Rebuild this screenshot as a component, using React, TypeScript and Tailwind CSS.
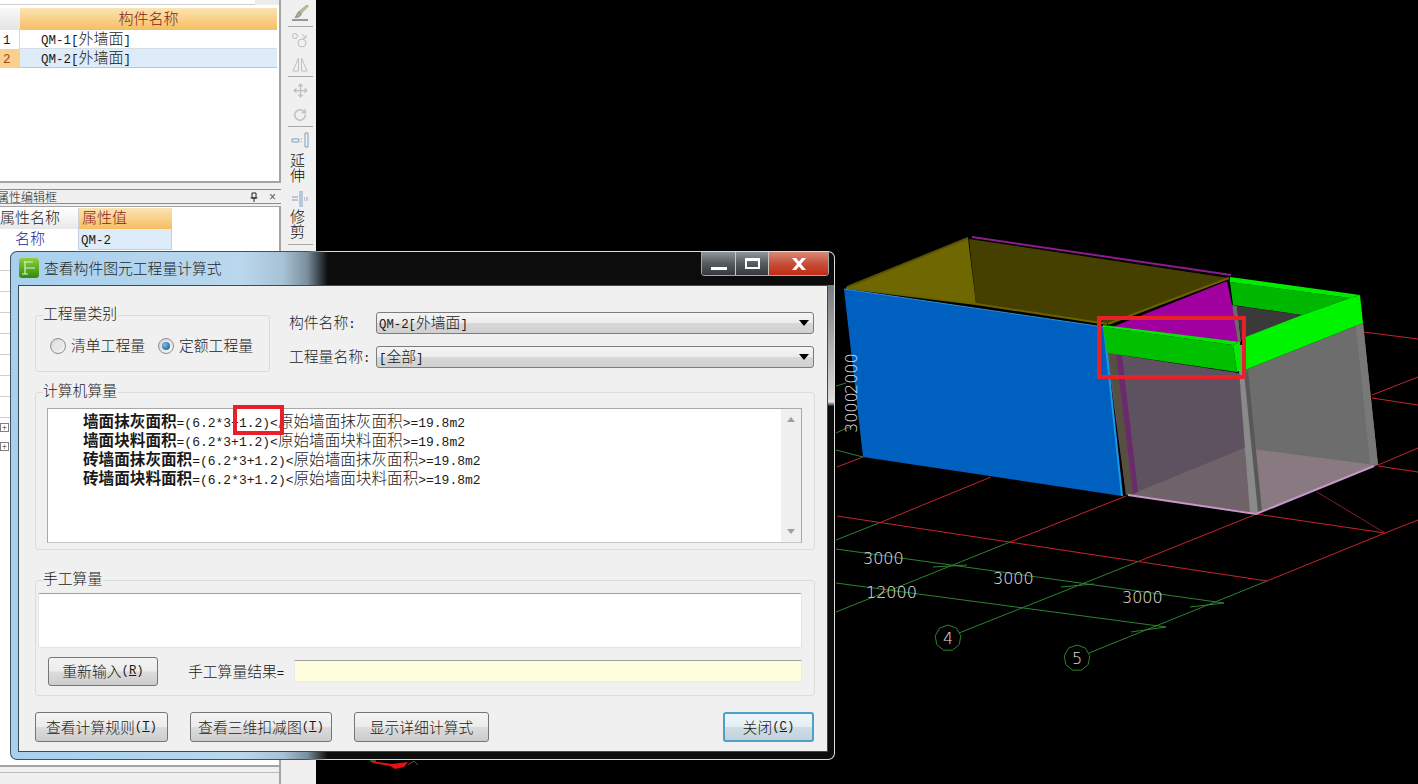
import React from "react";
import { Move, RotateCw } from "lucide-react";

function Txt({ children }: { children: string }) {
  const parts = children.split(/([\x00-\x7f]+)/);
  return (
    <>
      {parts.map((p, i) =>
        /^[\x00-\x7f]+$/.test(p) ? (
          <span key={i} className="font-['Liberation_Mono',monospace] text-[0.8333em]">
            {p}
          </span>
        ) : (
          p
        )
      )}
    </>
  );
}

function Sep() {
  return <div className="h-px w-[25px] shrink-0 bg-[#a8a8a8]" />;
}

function Toolbar() {
  return (
    <div className="flex h-full w-[35px] shrink-0 flex-col items-center bg-[#f0f0f0] pl-[3px] text-[15px] leading-[15px] text-[#111]">
      <div className="flex h-[26px] items-center">
        <svg width="20" height="20" viewBox="0 0 20 20" fill="none">
          <path d="M17 2l1 1.5-7 7-2-2z" fill="#c8c090" stroke="#8c8c70" strokeWidth="0.7" />
          <path d="M9 8.5l2.5 2.5c-1 2.5-3 3.5-6.5 3.5 1.5-1.500 1.500-4 4-6z" fill="#b0a890" stroke="#7a7a70" strokeWidth="0.7" />
          <path d="M2 17h16" stroke="#55606a" strokeWidth="1.2" />
        </svg>
      </div>
      <Sep />
      <div className="flex h-[25px] items-center">
        <svg width="18" height="18" viewBox="0 0 18 18" fill="none" stroke="#bdbdbd">
          <circle cx="4" cy="5" r="2.5" />
          <circle cx="11" cy="12" r="4" />
          <path d="M11 3l4 4M15 4v3h-3" />
        </svg>
      </div>
      <div className="flex h-[24px] items-center">
        <svg width="18" height="18" viewBox="0 0 18 18" fill="none" stroke="#c0c0c0">
          <path d="M7.500 3L2 16h5.500zM10.500 3L16 16h-5.500z" />
        </svg>
      </div>
      <Sep />
      <div className="flex h-[26px] items-center">
        <Move size={15} className="text-[#bdbdbd]" />
      </div>
      <div className="flex h-[23px] items-center">
        <RotateCw size={14} strokeWidth={3} className="text-[#c4c4c4]" />
      </div>
      <Sep />
      <div className="flex h-[25px] shrink-0 items-center pt-px">
        <svg width="18" height="16" viewBox="0 0 18 16" fill="none" stroke="#7f9fc0">
          <path d="M1 7h7v3H1zM10 7h1M10 10h1M14 1h3v14h-3z" />
        </svg>
      </div>
      <div className="-ml-[5px] text-center">延<br />伸</div>
      <div className="flex h-[26px] shrink-0 items-end">
        <svg width="18" height="18" viewBox="0 0 18 18" fill="none" stroke="#7f9fc0">
          <path d="M1 7h6M1 10h6M9 1v16M11 1v16M13 8h1M13 10h1M15 8h2M15 10h2" />
        </svg>
      </div>
      <div className="-ml-[5px] text-center">修<br />剪</div>
      <div className="mt-[6px]">
        <Sep />
      </div>
    </div>
  );
}

function LeftPanel() {
  const rows = [270, 291, 312, 333, 354, 375, 396, 417];
  return (
    <div className="flex h-full w-[281px] shrink-0 flex-col overflow-hidden bg-[#f0f0f0] text-[15px] text-[#1a1a1a]">
      {/* component list */}
      <div className="h-[183px] shrink-0 border-r-[2px] border-b-[2px] border-[#a4a4a4] bg-white">
        <div className="flex h-[5px]">
          <div className="w-[255px] border-b border-[#d0d0d0] bg-white" />
          <div className="flex-1 bg-[#ececec]" />
        </div>
        <div className="mt-[3px] flex h-[22px] pr-[2px] leading-[19px]">
          <div className="w-[20px] bg-[linear-gradient(#f8f8f8,#e4e4e4)]" />
          <div className="flex-1 bg-[linear-gradient(#fbe3b3,#f6be62)] text-center text-[#7d1c14]">构件名称</div>
        </div>
        <div className="flex h-[19px] pr-[2px] leading-[16px]">
          <div className="w-[20px] border-r border-[#d8d8d8] pl-[3px]"><Txt>1</Txt></div>
          <div className="flex-1 border-b border-[#d5dde6] pl-[21px]"><Txt>QM-1[</Txt>外墙面<Txt>]</Txt></div>
        </div>
        <div className="flex h-[19px] pr-[2px] leading-[16px]">
          <div className="w-[20px] bg-[#fbcf8e] pl-[3px] text-[#9a4a10]"><Txt>2</Txt></div>
          <div className="flex-1 border-b border-[#b4c8dc] bg-[#deebf8] pl-[21px]"><Txt>QM-2[</Txt>外墙面<Txt>]</Txt></div>
        </div>
      </div>
      {/* property editor */}
      <div className="mt-[6px] flex h-[15px] shrink-0 items-center border-y border-[#8c8c8c] pr-[2px] text-[12px]">
        <span className="-ml-[3px]">属性编辑框</span>
        <svg className="ml-auto" width="10" height="10" viewBox="0 0 10 10" fill="none" stroke="#222">
          <path d="M3 1h4v5H3zM1.500 6h7M5 6v4" />
        </svg>
        <span className="mr-[3px] ml-[10px] font-['Liberation_Sans',sans-serif] text-[#555]">×</span>
      </div>
      <div className="mt-[2px] flex-1 border-t border-r-[2px] border-[#a4a4a4] bg-white pt-px">
        <div className="flex h-[21px] leading-[18px]">
          <div className="w-[78px] overflow-hidden whitespace-nowrap bg-[linear-gradient(#fff,#e8e8e8)]">属性名称</div>
          <div className="w-[94px] border-l border-[#d0d0d0] bg-[linear-gradient(#fbe3b3,#f6be62)] pl-[3px] text-[#8a1c1c]">属性值</div>
        </div>
        <div className="flex h-[21px] leading-[18px]">
          <div className="w-[78px] pl-[15px] text-[#24249a]">名称</div>
          <div className="w-[94px] border-x border-b border-[#c0d0e0] bg-[#deebf8] pl-[2px]"><Txt>QM-2</Txt></div>
        </div>
        {rows.map((y) => (
          <div key={y} className="h-[21px] border-b border-[#cfcfcf]" />
        ))}
        <div className="mt-[5px] flex h-[19px] items-start">
          <div className="flex h-[9px] w-[9px] items-center justify-center border border-[#808080] text-[9px] leading-none">+</div>
        </div>
        <div className="flex h-[19px] items-start">
          <div className="flex h-[9px] w-[9px] items-center justify-center border border-[#808080] text-[9px] leading-none">+</div>
        </div>
      </div>
      {/* lower panel */}
      <div className="h-[19px] shrink-0 border-t-[2px] border-r-[2px] border-[#a4a4a4]">
        <div className="mt-[5px] h-px bg-[#bcbcbc]" />
      </div>
    </div>
  );
}

function ring(cx: number, cy: number, r: number) {
  return Array.from({ length: 9 }, (_, i) => {
    const a = (i * 2 * Math.PI) / 9 - Math.PI / 2;
    return `${cx + r * Math.cos(a)},${cy + r * Math.sin(a)}`;
  }).join(" ");
}

const redLines = [
  "837,516 1267,581",
  "837,467 863,457",
  "879,523 991,477",
  "1010,542 1126,496",
  "1137,562 1254,515",
  "1267,581 1385,533 1418,520",
  "1256,514 1385,533",
  "1364,332 1418,339",
  "1372,395 1418,377",
  "1372,398 1418,405",
  "1378,465 1418,448",
  "1378,466 1418,472",
];

const greenLines = [
  "836,549 1224,603",
  "836,583 1166,627",
  "836,540 879,523",
  "836,612 1010,542",
  "959,633 1137,562",
  "1089,653 1267,581",
  "933,567 967,565",
  "1061,587 1094,584",
  "1190,607 1224,603",
  "1131,632 1166,627",
  "836,450 863,457",
  "836,433 849,427",
  "836,386 846,383",
];

function Canvas() {
  return (
    <div className="h-full flex-1 bg-black">
      <svg className="block h-full w-full" viewBox="316 0 1102 784">
        {redLines.map((p) => (
          <polyline key={p} points={p} fill="none" stroke="#c4242c" strokeWidth="1" />
        ))}
        <line x1="1317" y1="492" x2="1385" y2="533" stroke="#8a1c20" strokeWidth="1" />
        {greenLines.map((p) => (
          <polyline key={p} points={p} fill="none" stroke="#2c8230" strokeWidth="1" />
        ))}
        <polygon points={ring(948, 638, 13)} fill="none" stroke="#2c8230" />
        <polygon points={ring(1077, 658, 13)} fill="none" stroke="#2c8230" />

        {/* floor and glass walls */}
        <polygon points="1107,353 1239,373 1256,513 1126,495" fill="#5e5260" />
        <polygon points="1245,370 1363,323 1378,465 1256,513" fill="#6d6d6d" />
        <polygon points="1137,492 1244,448 1256,513 1128,495" fill="#6f6268" />
        <polygon points="1244,448 1375,465 1258,513" fill="#887a80" />
        <polygon points="1356,326 1363,323 1378,465 1370,464" fill="#787878" />
        <polygon points="1237,345 1244,345 1258,513 1250,513" fill="#8a8a8a" />
        <polygon points="1244,372 1248,370 1262,511 1258,512" fill="#585858" />
        <polygon points="1109,353 1116,354 1133,494 1126,495" fill="#565040" />
        <polygon points="1116,354 1122,355 1138,492 1133,494" fill="#6a2a6c" />
        <polyline points="1128,495 1256,514 1374,466" fill="none" stroke="#c896c8" strokeWidth="2" />

        {/* blue and olive walls */}
        <polygon points="969,239 1229,278 1108,324 976,304" fill="#454000" />
        <polygon points="846,288 968,238 976,304" fill="#6f6800" />
        <polyline points="847,287 968,238" stroke="#5a5400" strokeWidth="2" />
        <polyline points="846,288 976,304 1107,324" fill="none" stroke="#6e6200" strokeWidth="2" />
        <polyline points="1108,324 1229,278" stroke="#6e6200" strokeWidth="2" />
        <polyline points="972,237 1231,275" stroke="#8e1c8e" strokeWidth="2" />
        <polygon points="844,289 1104,327 1122,496 863,457" fill="#0060c0" />
        <polyline points="844,289 1104,327" stroke="#2a90d8" strokeWidth="1" />
        <polyline points="1104,327 1122,496" stroke="#1a9ae4" strokeWidth="2" />

        {/* purple and green strips */}
        <polygon points="1227,281 1240,343 1110,328" fill="#a000a0" />
        <polygon points="1232,305 1238,342 1241,342 1237,306" fill="#6a6a6a" />
        <polygon points="1230,282 1350,298 1302,315 1233,305" fill="#00b800" />
        <polygon points="1237,306 1302,315 1247,338 1241,340" fill="#3a3a3a" />
        <polygon points="1230,277 1360,295 1350,298 1230,282" fill="#00ec00" />
        <polygon points="1350,298 1360,295 1363,323 1245,370 1243,338 1302,315" fill="#00f400" />
        <polygon points="1103,327 1233,345 1237,372 1107,353" fill="#00c000" />
        <polygon points="1103,325 1240,342 1233,345 1103,327" fill="#00e800" />
        <polygon points="1233,345 1240,342 1241,370 1237,372" fill="#00ee00" />

        <rect x="1099" y="318" width="145" height="59" fill="none" stroke="#e8202a" strokeWidth="4" />

        <g fill="#e0e0e0" fontFamily="'DejaVu Sans', sans-serif" fontSize="16">
          <text x="863" y="564">3000</text>
          <text x="993" y="584">3000</text>
          <text x="1122" y="603">3000</text>
          <text x="866" y="598">12000</text>
          <text x="948" y="644" textAnchor="middle">4</text>
          <text x="1077" y="664" textAnchor="middle">5</text>
          <text transform="translate(857,433) rotate(-90)">3000</text>
          <text transform="translate(857,394) rotate(-90)">2000</text>
        </g>
        <polygon points="371,761 392,764 408,762 404,767 395,769 390,766 373,763" fill="#e81010" />
        <polyline points="408,765 414,761 418,765" fill="none" stroke="#a03030" />
        <line x1="370" y1="761" x2="376" y2="761" stroke="#40a040" />
      </svg>
    </div>
  );
}

function Group({ title, className, children }: { title: string; className: string; children: React.ReactNode }) {
  return (
    <div className={`relative rounded-[3px] border border-[#dcdcdc] ${className}`}>
      <span className="absolute -top-[12px] left-[7px] bg-[#f0f0f0] pr-px leading-[18px]">{title}</span>
      {children}
    </div>
  );
}

function Radio({ checked, label }: { checked?: boolean; label: string }) {
  return (
    <div className="flex items-center gap-[5px]">
      <div className="flex h-4 w-4 items-center justify-center rounded-full border border-[#8c8c8c] bg-[linear-gradient(135deg,#d4d4d4,#fafafa)]">
        {checked ? (
          <div className="h-[8px] w-[8px] rounded-full bg-[radial-gradient(circle_at_35%_35%,#6fc0e8,#14507e)]" />
        ) : (
          <div className="h-[8px] w-[8px] rounded-full bg-[#e6e6e6]" />
        )}
      </div>
      <span>{label}</span>
    </div>
  );
}

function Select({ children }: { children: React.ReactNode }) {
  return (
    <div className="flex h-[22px] w-[438px] items-center rounded-[3px] border border-[#7c7c7c] bg-[linear-gradient(#f4f4f4,#ececec_48%,#d8d8d8_52%,#d0d0d0)] pr-[4px] pl-[2px] leading-[18px]">
      <span className="flex-1">{children}</span>
      <div className="h-0 w-0 border-x-[5px] border-t-[6px] border-x-transparent border-t-black" />
    </div>
  );
}

function Button({
  label,
  hot,
  className,
  primary,
}: {
  label: string;
  hot?: string;
  className: string;
  primary?: boolean;
}) {
  const skin = primary
    ? "border-[2px] border-[#4ea0c8] bg-[linear-gradient(#eef6fa,#e4eff5_48%,#cfdde5_52%,#c2d2da)]"
    : "border border-[#767676] bg-[linear-gradient(#f4f4f4,#ececec_48%,#dcdcdc_52%,#cccccc)]";
  return (
    <div className={`flex items-center justify-center rounded-[3px] ${skin} ${className}`}>
      {label}
      {hot && (
        <span className="font-['Liberation_Mono',monospace] text-[0.8333em]">
          (<u>{hot}</u>)
        </span>
      )}
    </div>
  );
}

function CalcLine({ name, tail }: { name: string; tail: string }) {
  return (
    <div className="h-[19px] whitespace-nowrap">
      <span className="font-bold">{name}</span>
      <Txt>{"=(6.2*3+1.2)<"}</Txt>
      {tail}
      <Txt>{">=19.8m2"}</Txt>
    </div>
  );
}

function Dialog() {
  return (
    <div className="absolute top-[251px] left-[10px] h-[509px] w-[825px] rounded-[7px] bg-[linear-gradient(90deg,#44525e,#44525e_36%,#dcdcdc_38.5%)] p-px text-[14.8px] text-[#1a1a1a]">
      <div className="flex h-full flex-col overflow-hidden rounded-[6px] bg-[linear-gradient(90deg,#a8d0ee,#bad7ec_28%,#a8c2d6_33%,#7a8f9e_36%,#0c0c0c_38.5%)]">
        {/* title bar */}
        <div className="flex h-[33px] shrink-0 items-start">
          <svg className="mt-[6px] ml-[8px]" width="20" height="20" viewBox="0 0 20 20">
            <defs>
              <linearGradient id="ti" x1="0" y1="0" x2="0" y2="1">
                <stop offset="0" stopColor="#8fd03c" />
                <stop offset="1" stopColor="#2f8a10" />
              </linearGradient>
            </defs>
            <rect width="20" height="20" rx="3" fill="url(#ti)" />
            <path d="M6 3v13M6 4h8M6 10h10M3 16h6" stroke="#dcf4c8" strokeWidth="1.2" fill="none" />
          </svg>
          <span className="mt-[6px] ml-[5px] leading-[20px] text-[#20262c]">查看构件图元工程量计算式</span>
          <div className="mr-[5px] ml-auto flex h-[24px] w-[128px] overflow-hidden rounded-b-[4px] border border-t-0 border-[#a0a8ae]">
            <div className="flex w-[34px] items-end justify-center border-r border-[#c8c8c8] bg-[linear-gradient(#90989e,#5a6066_45%,#34383c)] pb-[5px]">
              <div className="h-[3px] w-[16px] bg-white" />
            </div>
            <div className="flex w-[33px] items-center justify-center border-r border-[#c8c8c8] bg-[linear-gradient(#90989e,#5a6066_45%,#34383c)]">
              <div className="h-[11px] w-[15px] border-[2px] border-t-[3px] border-white" />
            </div>
            <div className="flex flex-1 items-center justify-center bg-[linear-gradient(#d88a78,#c8503a_50%,#c02c14)]">
              <svg width="16" height="14" viewBox="0 0 16 14">
                <path d="M1 1h4l3 3.500L11 1h4l-5 6 5 6h-4L8 9.500 5 13H1l5-6z" fill="#fff" />
              </svg>
            </div>
          </div>
        </div>
        {/* body */}
        <div className="flex h-[467px] shrink-0">
          <div className="w-[7px] shrink-0" />
          <div className="h-full w-[810px] shrink-0 border border-[#3c4a55] bg-[#f0f0f0] pt-[29px] pr-[13px] pl-[16px]">
            <div className="flex h-[57px]">
              <Group title="工程量类别" className="flex h-[57px] w-[236px] items-center gap-[13px] pt-[4px] pl-[14px]">
                <Radio label="清单工程量" />
                <Radio checked label="定额工程量" />
              </Group>
              <div className="-mt-[3px] ml-[19px] flex flex-col gap-[12px]">
                <div className="flex h-[22px] items-center leading-[18px]">
                  <span className="w-[87px]">构件名称<Txt>:</Txt></span>
                  <Select><Txt>QM-2[</Txt>外墙面<Txt>]</Txt></Select>
                </div>
                <div className="flex h-[22px] items-center leading-[18px]">
                  <span className="w-[87px]">工程量名称<Txt>:</Txt></span>
                  <Select><Txt>[</Txt>全部<Txt>]</Txt></Select>
                </div>
              </div>
            </div>
            <Group title="计算机算量" className="mt-[20px] h-[158px] w-[780px] pt-[15px] pl-[11px]">
              <div className="flex h-[135px] w-[755px] border border-[#a8a8a8] border-b-[#c8c8c8] bg-white">
                <div className="flex-1 pt-[2px] pl-[35px] text-[15.6px] leading-[19px]">
                  <CalcLine name="墙面抹灰面积" tail="原始墙面抹灰面积" />
                  <CalcLine name="墙面块料面积" tail="原始墙面块料面积" />
                  <CalcLine name="砖墙面抹灰面积" tail="原始墙面抹灰面积" />
                  <CalcLine name="砖墙面块料面积" tail="原始墙面块料面积" />
                </div>
                <div className="flex w-[20px] flex-col items-center justify-between bg-[#f0f0f0] py-[8px]">
                  <div className="h-0 w-0 border-x-[4px] border-b-[5px] border-x-transparent border-b-[#a0a0a0]" />
                  <div className="h-0 w-0 border-x-[4px] border-t-[5px] border-x-transparent border-t-[#a0a0a0]" />
                </div>
              </div>
            </Group>
            <Group title="手工算量" className="mt-[30px] h-[116px] w-[780px] pt-[12px] pl-[2px]">
              <div className="h-[55px] w-[764px] rounded-[2px] border border-[#e4e4e4] border-t-[#a0a0a0] bg-white" />
              <div className="mt-[9px] flex items-start pl-[10px]">
                <Button label="重新输入" hot="R" className="h-[29px] w-[110px]" />
                <span className="mt-[3px] ml-[30px] w-[106px] whitespace-nowrap">手工算量结果<Txt>=</Txt></span>
                <div className="mt-[3px] h-[22px] w-[508px] border border-[#e8e8e8] border-t-[#a0a0a0] bg-[#ffffe0]" />
              </div>
            </Group>
            <div className="mt-[16px] flex h-[30px] gap-[22px]">
              <Button label="查看计算规则" hot="T" className="w-[133px]" />
              <Button label="查看三维扣减图" hot="T" className="w-[142px]" />
              <Button label="显示详细计算式" className="w-[135px]" />
              <Button primary label="关闭" hot="C" className="ml-[212px] w-[91px]" />
            </div>
          </div>
          <div className="w-[6px] flex-1 bg-[linear-gradient(#777c80,#d8d8d8_24%,#e4e4e4_25%,#0c0c0c_26%)]" />
        </div>
        <div className="flex-1" />
      </div>
    </div>
  );
}

export default function App() {
  return (
    <div className="relative flex h-[784px] w-[1418px] overflow-hidden bg-black font-['Noto_Sans_CJK_SC',sans-serif] font-light">
      <LeftPanel />
      <Toolbar />
      <Canvas />
      <Dialog />
      {/* red annotation over the formula */}
      <div className="absolute top-[405px] left-[233px] h-[30px] w-[51px] border-[4px] border-[#e8202a]" />
    </div>
  );
}
